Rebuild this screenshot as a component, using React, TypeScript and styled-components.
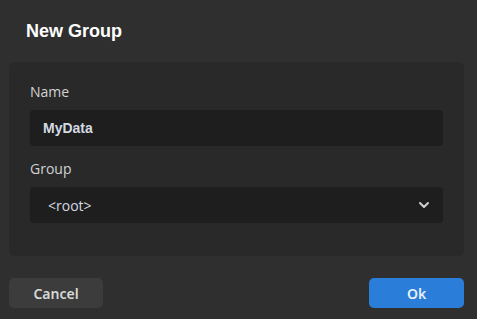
import styled, { createGlobalStyle } from "styled-components"

const GlobalStyle = createGlobalStyle`
html, body {
  margin: 0;
  padding: 0;
  background: #2f2f2f;
}
`

const Dialog = styled.div`
width: 477px;
height: 319px;
box-sizing: border-box;
display: flex;
flex-direction: column;
padding: 0 13px 0 9px;
background: #2f2f2f;
font-family: "Open Sans", sans-serif;
`

const Title = styled.h1`
margin: 0;
padding: 21px 0 0 17px;
height: 62px;
box-sizing: border-box;
font-family: "Liberation Sans", Arial, sans-serif;
font-size: 18px;
font-weight: bold;
color: #ffffff;
`

const Panel = styled.div`
display: flex;
flex-direction: column;
height: 194px;
box-sizing: border-box;
padding: 20px 21px 0 21px;
background: #292929;
border-radius: 6px;
`

const Label = styled.label`
font-size: 14px;
line-height: 19px;
color: #d2d2d2;
margin-bottom: 9px;
`

const Field = styled.div<{ $bold?: boolean }>`
display: flex;
align-items: center;
justify-content: space-between;
height: 36px;
box-sizing: border-box;
padding: 0 13px 0 ${p => (p.$bold ? "13px" : "18px")};
background: #1e1e1e;
border-radius: 4px;
font-family: ${p => (p.$bold ? '"Liberation Sans", Arial, sans-serif' : '"Open Sans", sans-serif')};
font-size: 14px;
font-weight: ${p => (p.$bold ? "bold" : "normal")};
color: #d4dae2;
margin-bottom: 13px;
`

const Footer = styled.div`
display: flex;
justify-content: space-between;
margin-top: 22px;
`

const Button = styled.button<{ $primary?: boolean }>`
width: ${p => (p.$primary ? "95px" : "94px")};
height: 30px;
border: none;
border-radius: 5px;
background: ${p => (p.$primary ? "#2a7dd9" : "#3c3c3c")};
color: ${p => (p.$primary ? "#e8f0fa" : "#d8d8d8")};
font-family: "Noto Sans", sans-serif;
font-size: 14px;
font-weight: 600;
cursor: pointer;
`

const Chevron = () => (
  <svg width="12" height="12" viewBox="0 0 12 12" fill="none">
    <path d="M2 4l4 4 4-4" stroke="#d0d0d0" strokeWidth="2" strokeLinecap="round" strokeLinejoin="round" />
  </svg>
)

export default function App() {
  return (
    <>
      <GlobalStyle />
      <Dialog>
        <Title>New Group</Title>
        <Panel>
          <Label>Name</Label>
          <Field $bold>MyData</Field>
          <Label>Group</Label>
          <Field>
            <span>&lt;root&gt;</span>
            <Chevron />
          </Field>
        </Panel>
        <Footer>
          <Button>Cancel</Button>
          <Button $primary>Ok</Button>
        </Footer>
      </Dialog>
    </>
  )
}
